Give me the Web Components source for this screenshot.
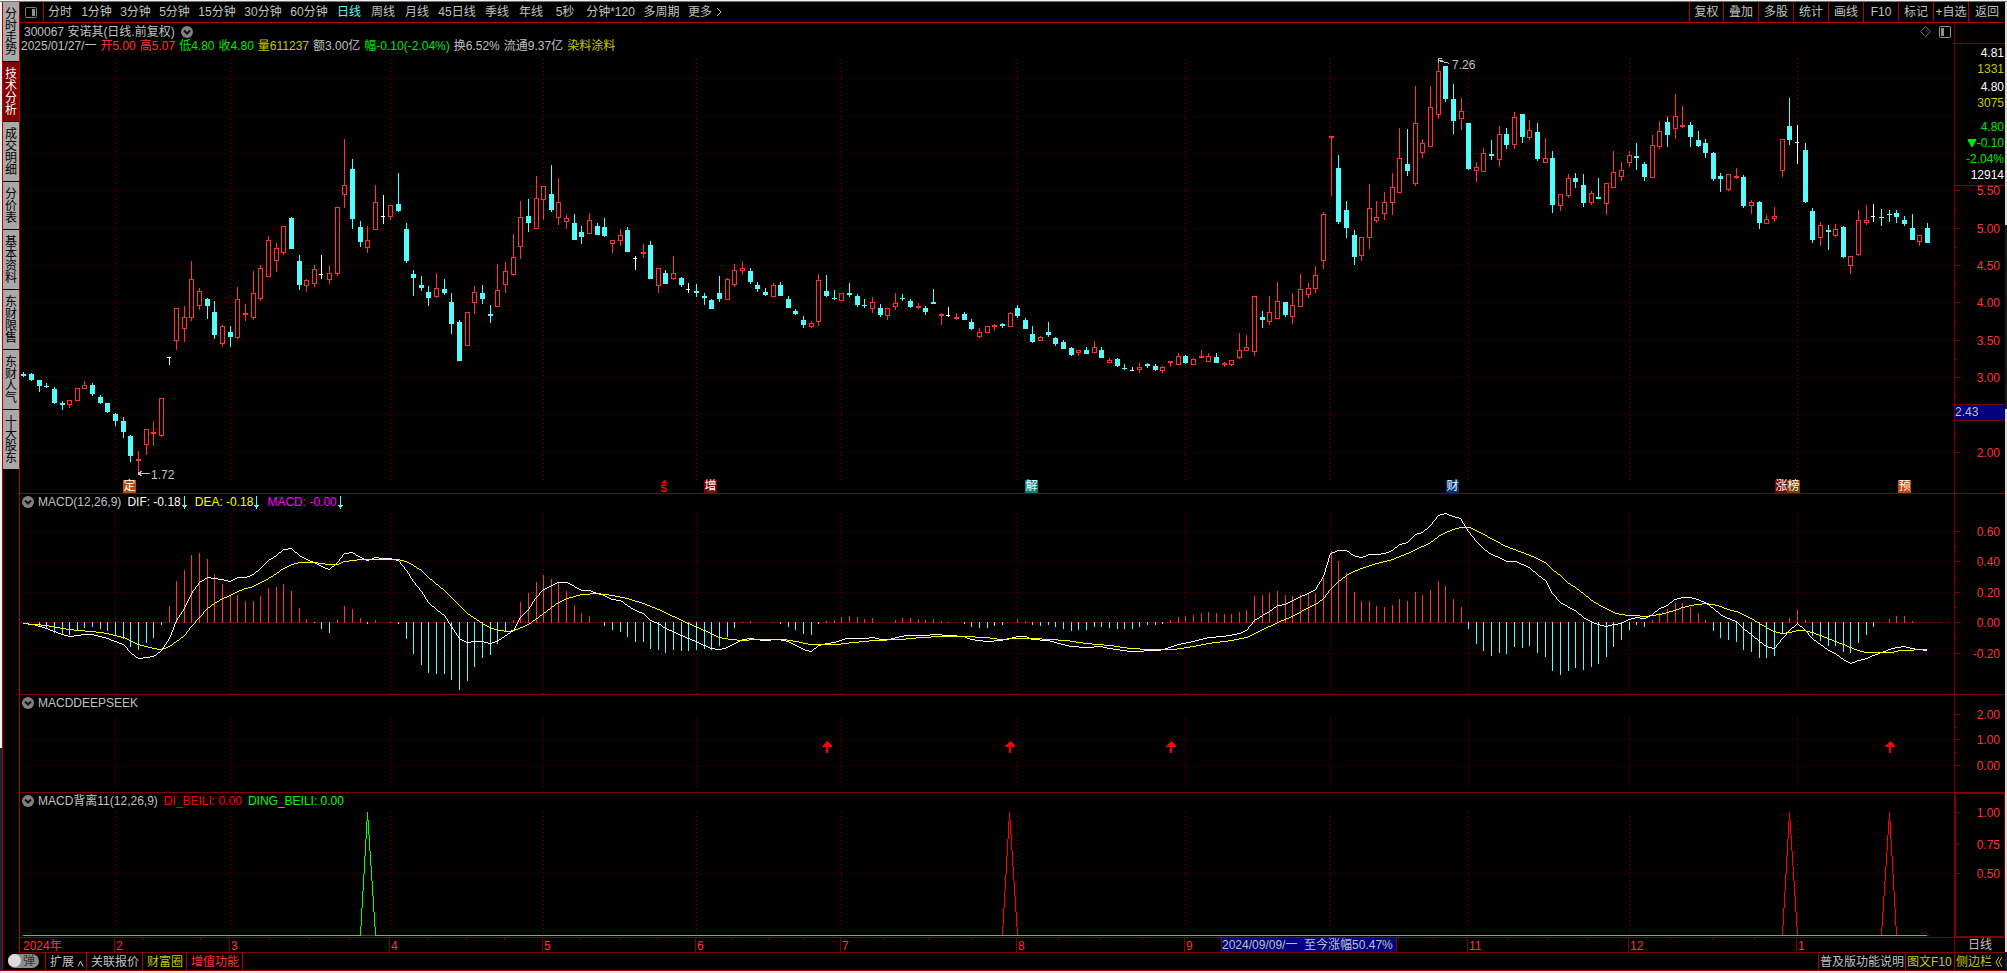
<!DOCTYPE html>
<html lang="zh-CN">
<head>
<meta charset="utf-8">
<title>300067 安诺其</title>
<style>
html,body{margin:0;height:100%}
body{background:#000;color:#c0c0c0;font:12px/16px "Liberation Sans","Noto Sans CJK SC",sans-serif;overflow:hidden;
--line:#b00000;--dim:#800000;--red:#ff3232;--cyan:#54fcfc;--olive:#c8c800;--green:#00e600}
</style>
</head>
<body>
<quote-app></quote-app>
<script>
/* ---------- data ---------- */
/* x advance between bars and chart-space helpers; prices are stored at a third of a chart unit */
const barX = i => 23 + Math.floor(i * 7.645 + 0.8);
const t = v => Math.round(v / 3);
const CANDLES = `c1117,1122,1128,1131 c1119,1122,1140,1143 c1140,1140,1158,1176 c1149,1157,1160,1164 c1161,1167,1209,1212 c1203,1209,1214,1230 r1200,1200,1215,1224 r1164,1164,1203,1203 r1143,1155,1167,1167 c1149,1155,1182,1188
c1185,1191,1209,1212 c1209,1209,1236,1239 c1239,1242,1263,1278 c1251,1263,1296,1314 c1305,1308,1368,1386 r1353,1377,1383,1416 r1287,1287,1335,1365 r1263,1296,1302,1338 r1194,1194,1308,1311 w1071,1071,1074,1095
r924,924,1023,1050 r918,951,987,1026 r783,837,954,963 r864,873,918,930 c894,897,918,957 c903,936,1005,1017 r975,978,1032,1041 c978,996,1011,1041 r861,897,1014,1017 r912,939,945,963
r813,879,954,960 r795,804,897,903 r708,720,831,831 r729,744,783,816 r678,678,759,765 c651,654,747,747 c765,783,855,870 r837,840,858,876 r795,807,852,861 w765,822,825,837
r795,819,840,852 r621,621,822,828 r417,555,585,624 c477,507,657,687 c663,681,726,741 r678,720,744,759 r555,606,690,690 w585,648,651,672 r615,615,651,660 c519,612,633,636
c669,687,783,789 c810,822,834,888 c828,855,864,873 c858,876,894,918 r819,864,891,894 c837,867,879,885 c879,906,972,1002 c960,966,1083,1083 r936,936,1038,1038 r858,876,909,942
c855,879,897,912 c915,942,948,969 r792,870,921,921 r786,813,855,879 r702,771,825,828 r603,651,741,777 c597,648,669,696 r528,594,687,687 r558,558,600,660 c495,582,630,636
r534,606,654,675 r645,654,666,687 c642,669,720,720 c678,696,711,732 r639,660,702,702 c669,678,705,705 c654,681,708,711 r720,720,732,759 r687,705,723,738 c681,690,756,756
w768,774,777,810 r732,756,762,774 c723,735,837,837 r804,804,858,879 c810,819,852,852 r768,819,837,840 c831,834,855,861 w849,867,870,879 c852,873,879,891 c879,888,894,915
c897,900,927,927 c828,879,897,906 r834,837,900,900 r792,810,855,861 r783,804,813,825 c804,813,846,852 c846,855,867,876 c864,876,885,888 r849,855,891,891 c846,855,888,888
c888,897,924,924 c927,933,942,945 c948,960,975,984 r963,969,981,984 r822,840,966,978 c825,873,888,891 c870,894,897,900 r879,879,903,903 c849,879,885,891 c882,888,915,921
c897,915,918,924 r891,906,927,939 c912,924,945,951 r924,924,948,960 r879,909,921,930 c882,894,897,903 c897,903,921,924 r909,918,924,927 c918,924,936,945 c867,906,912,912
r939,942,948,975 w921,945,948,951 r939,951,957,960 c936,942,960,960 c957,966,987,990 r984,996,1011,1014 r978,978,999,999 r972,975,981,993 c969,972,978,984 r936,939,981,981
c915,924,948,954 c954,960,987,987 c978,1002,1026,1029 r1008,1011,1023,1023 c966,996,1005,1011 c1011,1014,1032,1038 c1020,1026,1047,1047 c1041,1044,1065,1068 r1050,1050,1059,1068 c1041,1050,1062,1062
r1023,1041,1059,1059 c1041,1050,1074,1074 r1074,1080,1089,1089 c1074,1077,1098,1101 c1092,1104,1107,1110 w1101,1110,1113,1113 r1089,1101,1110,1119 c1089,1092,1098,1104 c1092,1098,1110,1113 r1098,1101,1113,1119
r1083,1083,1089,1101 r1059,1068,1095,1095 c1065,1068,1089,1092 r1074,1077,1095,1095 r1050,1068,1074,1074 r1059,1068,1086,1086 c1059,1071,1089,1089 r1086,1089,1095,1101 r1080,1080,1095,1098 r999,1050,1074,1077
r1005,1041,1053,1053 r888,888,1056,1068 c933,951,960,984 r888,936,966,975 r846,903,957,957 c906,906,945,951 r879,915,951,972 r822,867,921,921 r849,864,885,894 r798,825,867,879
r636,642,783,807 r408,408,414,588 c465,504,666,672 c603,630,684,714 c690,705,771,795 r711,711,768,783 r552,624,714,747 r603,651,663,669 r576,606,642,660 r519,561,609,645
r384,474,579,579 c387,492,513,528 r258,369,552,558 r417,429,459,474 r258,321,441,441 r180,213,345,357 c198,198,297,306 c252,297,363,402 r294,333,357,390 c369,369,507,510
r486,501,513,546 r444,459,516,516 c420,462,468,480 r378,402,480,501 c384,402,435,447 r336,351,435,447 c342,342,411,429 r360,390,414,420 c369,396,477,483 r414,474,489,489
c453,474,615,639 r582,582,618,633 r522,534,588,594 c519,534,546,564 c522,555,609,621 r573,579,609,615 c534,591,597,597 r549,549,612,645 r453,516,564,564 r486,510,531,543
r453,465,489,501 c429,468,474,510 c486,492,531,543 r405,435,534,534 r363,393,441,447 c351,366,405,441 r282,348,387,417 r318,375,381,384 c366,375,411,441 c393,420,438,441
c417,429,459,474 c456,459,537,543 c519,528,537,576 r522,522,570,573 r504,528,534,537 c525,531,618,624 r600,606,618,642 c603,606,669,687 r645,657,672,672 r621,648,657,666
r417,417,513,531 c294,378,420,435 w375,426,429,492 c429,450,606,609 c624,633,720,729 r666,675,714,738 c675,690,696,750 r672,687,708,711 c678,681,771,774 r768,768,798,822
r630,660,765,768 r615,660,669,675 w612,648,651,666 c627,651,654,678 c630,642,645,666 c630,639,651,669 c648,660,672,678 c642,684,720,720 r705,705,726,738 c669,684,729,729`
 .split(/\s+/).map(s => ({k: s[0], v: s.slice(1).split(',').map(t)}));

const HIST = [0,0,440,445,458,466,465,452,443,440,446,453,467,476,500,509,488,473,434,378,303,270,225,219,237,282,312,348,345,363,363,348,324,321,312,333,384,417,429,446,458,420,378,387,414,432,420,0,425,432,476,521,554,578,581,581,599,629,602,560,533,524,491,
453,420,366,339,306,285,297,309,333,375,399,408,0,438,449,455,470,485,485,506,509,518,509,512,512,509,506,509,497,470,443,425,423,0,0,425,431,440,449,461,464,432,423,420,411,408,411,417,414,0,0,420,414,414,417,420,417,423,425,0,432,440,443,443,437,
434,0,417,423,434,437,434,440,446,452,449,449,440,440,443,446,446,446,440,434,434,431,420,411,408,405,399,396,399,402,402,396,390,348,345,339,333,345,348,342,342,339,294,213,243,279,336,363,363,378,381,375,357,363,336,345,330,303,318,357,381,446,491,512,527,518,
521,500,503,497,518,530,572,584,572,563,569,560,551,530,500,479,449,434,440,420,399,387,369,369,381,399,420,452,473,479,485,509,515,533,533,527,458,414,390,420,467,482,497,497,515,518,488,464,440,0,417,408,408,423];

const DIF = `70,430 100,433 139,445 163,454 187,463 208,469 232,466 253,463 277,463 301,468 322,475 346,483 370,494 391,517 415,535 439,532 460,528 484,510 508,475 529,422 553,385 574,340 598,306 622,292 643,295 667,297 691,303 712,292 736,292 760,283 781,266 805,240 829,225 850,208 874,205 898,226 919,237 943,247 964,258 988,268 1012,248 1033,220 1057,217 1081,231 1102,241 1126,232 1150,234 1171,235 1195,240 1219,272 1240,303 1264,335 1285,367 1309,387 1333,405 1354,440 1378,476 1402,487 1423,484 1447,484 1471,490 1495,480 1540,450 1561,411 1585,388 1606,355 1630,327 1654,316 1675,307 1702,307 1723,319 1744,331 1768,331 1792,340 1813,346 1837,357 1861,362 1882,376 1906,391 1930,401 1951,421 1975,431 1996,445 2020,455 2044,466 2065,476 2089,485 2113,495 2134,504 2158,509 2182,503 2203,490 2227,478 2251,475 2290,481 2335,479 2365,485 2390,497 2410,508 2434,514 2455,496 2480,490 2503,487 2540,476 2590,475 2620,472 2645,478 2665,478 2690,472 2720,466 2780,466 2800,463 2850,466 2890,470 2914,478 2960,485 3000,481 3028,474 3052,468 3076,470 3097,478 3145,481 3166,488 3190,494 3214,499 3260,501 3300,499 3328,505 3350,508 3390,514 3425,514 3440,511 3475,511 3500,505 3535,493 3580,484 3625,472 3670,470 3718,461 3740,450 3763,421 3787,406 3808,393 3832,376 3856,373 3877,362 3901,348 3925,339 3946,328 3970,290 3991,220 4015,211 4039,211 4060,225 4084,232 4108,223 4129,223 4153,219 4177,211 4198,193 4222,186 4246,163 4267,156 4291,136 4315,106 4336,100 4360,109 4381,115 4405,153 4429,184 4450,206 4474,223 4498,232 4519,244 4545,244 4567,253 4588,262 4612,283 4636,302 4657,340 4681,367 4702,379 4726,391 4750,412 4771,424 4795,434 4819,439 4840,433 4864,429 4885,418 4909,412 4933,414 4957,402 4978,386 5002,375 5023,357 5047,352 5071,352 5092,357 5116,367 5140,386 5161,403 5185,414 5209,425 5230,446 5254,463 5278,483 5299,498 5323,505 5347,475 5368,452 5392,431 5413,447 5437,476 5461,493 5482,508 5506,519 5530,537 5551,550 5575,541 5599,535 5620,525 5644,518 5668,508 5689,502 5713,499 5734,504 5758,508 5780,512`;
const DEA = `70,430 139,436 187,444 232,451 277,455 322,460 370,471 391,481 415,493 439,500 460,505 484,508 508,499 529,485 553,465 574,440 598,412 622,386 643,370 667,356 691,346 712,335 736,325 760,319 781,308 805,294 829,280 850,266 874,253 898,247 943,247 964,250 985,253 1012,253 1033,244 1081,238 1195,238 1219,244 1240,255 1264,271 1285,291 1333,330 1378,376 1402,400 1447,430 1475,445 1500,452 1525,454 1550,449 1585,433 1606,418 1654,382 1675,366 1702,354 1744,344 1792,341 1837,347 1882,354 1930,371 1975,388 2020,410 2065,430 2113,452 2158,471 2190,479 2230,481 2260,478 2350,478 2390,484 2430,492 2510,493 2560,486 2620,481 2700,477 2760,471 2820,468 2890,469 2960,473 3000,478 3050,475 3100,475 3150,479 3200,482 3260,490 3330,496 3390,505 3450,508 3520,508 3580,499 3625,490 3695,482 3740,471 3763,460 3808,440 3832,426 3877,408 3925,382 3946,372 3970,354 3991,327 4015,303 4039,285 4060,274 4084,264 4129,250 4177,238 4222,219 4267,199 4291,186 4315,170 4336,156 4360,147 4381,142 4410,142 4429,151 4500,189 4519,199 4567,216 4612,236 4636,248 4657,268 4681,287 4702,308 4726,323 4750,341 4771,359 4795,373 4819,386 4840,397 4864,403 4885,406 4909,406 4933,409 4957,406 4978,404 5002,397 5023,391 5047,381 5071,376 5092,374 5116,370 5140,373 5161,378 5185,387 5209,393 5230,402 5254,414 5278,430 5299,441 5323,453 5347,460 5368,458 5392,451 5413,451 5437,457 5461,465 5506,483 5530,493 5551,503 5575,511 5599,517 5675,517 5700,512 5780,508`;
const MONTHS = [[115,'2'],[230,'3'],[390,'4'],[543,'5'],[696,'6'],[841,'7'],[1017,'8'],[1185,'9'],[1330,''],[1468,'11'],[1629,'12'],[1797,'1']];
const WEEKS = [143,200,269,309,349,427,466,504,580,619,657,731,768,804,884,928,972,1058,1100,1142,1220,1398,1433,1507,1548,1588,1670,1712,1754];
const X0 = 20, W = 1934;

/* ---------- drawing helpers ---------- */
const rect = (x,y,w,h,f) => `<rect x="${x}" y="${y}" width="${w}" height="${h}" fill="${f}"/>`;
const box = (x,y,w,h,f) => `<rect x="${x+.5}" y="${y+.5}" width="${w-1}" height="${h-1}" fill="#000" stroke="${f}"/>`;
/* one-cell-wide stepped line through integer points */
const stepped = (pts,c) => {
  let d = '';
  for(let i = 1; i < pts.length; i++){
    const [x0,y0] = pts[i-1], [x1,y1] = pts[i];
    const n = Math.max(Math.abs(x1-x0), Math.abs(y1-y0));
    for(let k = 0; k <= n; k++) d += `M${Math.round(x0+(x1-x0)*k/(n||1))} ${Math.round(y0+(y1-y0)*k/(n||1))}h1v1h-1z`;
  }
  return `<path d="${d}" fill="${c}"/>`;
};
const curve = (s,c) => stepped(s.split(' ').map(p => { const [x,y] = p.split(','); return [Math.floor(x/3), Math.floor(y/3)+480]; }), c);
const grid = (ys,top,bottom,dense) =>
  ys.map(y => `<path d="M21 ${y}.5H1951" stroke="${y===dense?'#a00000':'#700000'}" stroke-dasharray="${y===dense?'1 1':'1 3'}"/>`).join('') +
  MONTHS.map(([x]) => `<path d="M${x}.5 ${top}V${bottom}" stroke="#800000" stroke-dasharray="1 3"/>`).join('');

const RED = '#ff3232', CYAN = '#54fcfc';
const plots = {
  price: () => grid([78,116,153,190,228,265,302,340,377,414,452],59,481) +
    CANDLES.map(({k,v:[hi,a,b,lo]},i) => {
      const x = barX(i), c = k==='r' ? RED : k==='c' ? CYAN : '#fff', h = Math.max(1,b-a);
      const body = k==='w' ? rect(x-2,a,4,1,c) : k==='r' && h>2 ? box(x-2,a,5,h,c) : rect(x-2,a,5,h,c);
      return rect(x,hi,1,Math.max(1,lo-hi),c) + body;
    }).join('') +
    `<path d="M138.5 473.500H150M138.500 473.500L142.500 470.500M138.500 473.500L142.500 476.500M138 472.500h2v2h-2zM1438.500 60.500L1449.500 63.500M1438.500 63V58.500H1442M1438.500 60.500h4" fill="none" stroke="#c0c0c0"/>` +
    `<path d="M661 483h6l-3-3z" fill="#f00"/>`,
  macd: () => grid([531,561,592,622,653],513,694,622) +
    HIST.map((e,i) => { if(!e) return ''; const y = 480+t(e); return y<=622 ? rect(barX(i),y,1,623-y,RED) : rect(barX(i),622,1,Math.max(1,y-622),CYAN); }).join('') +
    curve(DIF,'#fff') + curve(DEA,'#ff0'),
  seek: () => grid([739,765],718,788) +
    [827,1010,1171,1890].map(x => `<path d="M${x} 741l5 5v1h-4v6h-2v-6h-4v-1z" fill="#f00"/>`).join(''),
  beili: () => grid([873],812,936) + rect(23,935,1904,1,'#0f0') +
    stepped([[360,934],[367,812],[375,934]],'#0f0') + rect(361,935,14,1,'#f00') +
    [[1002,1009,1017],[1782,1789,1797],[1881,1889,1896]].map(([a,b,c]) => stepped([[a,934],[b,812],[c,934]],'#f00')).join('')
};

/* ---------- components ---------- */
const define = (name, html) => customElements.define(name, class extends HTMLElement {
  connectedCallback(){
    if(this.shadowRoot) return;
    this.attachShadow({mode:'open'}).innerHTML = typeof html==='function' ? html(this) : html;
  }
});

define('fold-dot', `<style>:host{display:block;width:12px;height:12px;flex:none}button{all:unset;display:block;height:12px}svg{display:block}</style>
<button aria-label="菜单"><svg width="12" height="12" viewBox="0 0 12 12"><circle cx="6" cy="6" r="6" fill="#808080"/><path d="M3 4.500L6 7.500L9 4.500" fill="none" stroke="#111" stroke-width="2"/></svg></button>`);

define('down-arrow', `<style>:host{display:block;width:5px;height:13px;flex:none}svg{display:block}</style>
<svg width="5" height="13" viewBox="0 0 5 13" shape-rendering="crispEdges"><path d="M2 0h1v9h2v1h-1v1h-1v2h-1v-2h-1v-1h-1v-1h2z" fill="#54fcfc"/></svg>`);

const PERIODS = [['分时',34],['1分钟',39],['3分钟',39],['5分钟',39],['15分钟',46],['30分钟',46],['60分钟',46],['日线',34],['周线',34],['月线',34],['45日线',46],['季线',34],['年线',34],['5秒',34],['分钟*120',57],['多周期',45]];
define('period-bar', `<style>
:host{display:flex;height:20px;border-bottom:1px solid var(--line);line-height:20px;white-space:nowrap}
button{all:unset;box-sizing:border-box;text-align:center;flex:none;height:20px}
.split{width:24px;margin-right:-1px;border-right:1px solid var(--line);display:flex;align-items:center;padding-left:5px}
.on{color:var(--cyan)}
.more{display:flex;align-items:center;gap:4px;padding-left:4px}
.acts{display:flex;margin-left:auto}
.acts button{width:35px;border-left:1px solid var(--line)}
.acts button:first-child{width:34px}.acts button:last-child{width:37px}
</style>
<button class="split" aria-label="布局"><svg width="12" height="11" viewBox="0 0 12 11"><rect x=".5" y=".5" width="11" height="10" rx="1" fill="none" stroke="#808080"/><rect x="7" y="2" width="3" height="7" fill="#909090"/></svg></button>
${PERIODS.map(([s,w]) => `<button style="width:${w}px"${s==='日线'?' class="on"':''}>${s}</button>`).join('')}
<button class="more">更多<svg width="6" height="10" viewBox="0 0 6 10"><path d="M1 1L5 5L1 9" fill="none" stroke="#c0c0c0"/></svg></button>
<div class="acts">${['复权','叠加','多股','统计','画线','F10','标记','+自选','返回'].map(s => `<button>${s}</button>`).join('')}</div>`);

define('side-tabs', `<style>
:host{display:flex;flex-direction:column;border-right:1px solid var(--line);width:16px}
button{all:unset;box-sizing:border-box;display:flex;align-items:center;justify-content:center;height:60px;border-bottom:1px solid #000;background:#a9a9a9;color:#000;line-height:12px}
button.three{height:48px}
button:first-child{height:59px}
button.on{background:#800000;color:#fff}
span{width:12px;word-break:break-all}
</style>${['分时走势','技术分析','成交明细','分价表','基本资料','东财限售','东财人气','十大股东'].map(s => `<button class="${s.length===3?'three':''}${s==='技术分析'?'on':''}"><span>${s}</span></button>`).join('')}`);

/* A chart pane: title slot on top, plot behind, markers placed along the time scale */
define('chart-pane', el => {
  const [y,h] = el.getAttribute('range').split(' ').map(Number);
  return `<style>
:host{display:block;position:relative;border-bottom:1px solid var(--dim);min-height:0;overflow:hidden}
svg{position:absolute;inset:0;width:100%;height:100%;display:block}
.head{position:relative}
</style><svg viewBox="${X0} ${y} ${W} ${h}" preserveAspectRatio="none" shape-rendering="crispEdges">${plots[el.getAttribute('plot')]()}</svg>
<div class="head"><slot></slot></div><slot name="mark"></slot>`;
});

define('study-title', `<style>:host{display:flex;align-items:center;height:16px;line-height:16px;padding-left:2px;white-space:nowrap}fold-dot{margin-right:4px}</style><fold-dot></fold-dot><slot></slot>`);

define('event-tag', el => `<style>
:host{position:absolute;bottom:0;left:${(el.getAttribute('at')-X0)/W*100}%;width:13px;height:13px;line-height:13px;background:${el.getAttribute('tone')};color:#fff;text-align:center;white-space:nowrap}
:host([plain]){width:7px;height:9px;line-height:9px;font-size:10px;font-weight:bold;color:#f00}
</style><slot></slot>`);

define('price-note', el => `<style>
:host{position:absolute;left:${(el.getAttribute('at')-X0)/W*100}%;top:${(el.getAttribute('y')-23)/470*100}%;line-height:16px}
</style><slot></slot>`);

/* Value scale at the right of a pane */
define('value-scale', el => {
  const [y,h] = el.getAttribute('range').split(' ').map(Number);
  const marks = el.getAttribute('marks').split(' ').map(s => s.split('@'));
  const minor = el.getAttribute('minor').split(' ');
  const pc = v => (v-y)/h*100+'%';
  return `<style>
:host{display:block;position:relative;border-left:1px solid var(--dim);border-bottom:1px solid var(--dim);min-height:0;overflow:hidden}
:host([boxed]){box-shadow:inset 0 0 0 1px var(--dim)}
.n{position:absolute;right:5px;margin-top:-7px;line-height:16px;color:var(--red)}
i{position:absolute;left:0;width:5px;height:1px;background:var(--dim)}
i.s{width:2px}
.cur{position:absolute;left:0;right:0;height:15px;line-height:15px;background:#000080;border:solid var(--dim);border-width:1px 0}
</style>${marks.map(([v,p]) => `<i style="top:${pc(p)}"></i><span class="n" style="top:${pc(p)}">${v}</span>`).join('')}
${minor.map(p => `<i class="s" style="top:${pc(p)}"></i>`).join('')}
${el.hasAttribute('current') ? `<div class="cur" style="top:${pc(404)}">${el.getAttribute('current')}</div>` : ''}
<slot></slot>`;
});

define('quote-box', `<style>
:host{display:flex;flex-direction:column;box-sizing:border-box;position:relative;margin-top:20px;height:143px;padding-top:1px;border:solid var(--dim);border-width:1px 0;text-align:right;color:#fff;background:#000}
span{line-height:16px;padding-right:1px}.y{color:var(--olive)}.g{color:var(--green)}.a{margin-top:2px}.b{margin-top:8px}
.d{display:flex;justify-content:flex-end;align-items:center;gap:1px}
</style><span>4.81</span><span class="y">1331</span><span class="a">4.80</span><span class="y">3075</span>
<span class="g b">4.80</span><span class="g d"><svg width="8" height="8" viewBox="0 0 8 8"><path d="M0 0h8v2L4.500 8h-1L0 2z" fill="#00e600"/></svg>-0.10</span><span class="g">-2.04%</span><span>12914</span>`);

define('time-scale', `<style>
:host{display:block;position:relative;height:14px;border-bottom:1px solid var(--dim);line-height:14px;color:var(--red);white-space:nowrap}
span{position:absolute;top:0;height:14px;border-left:1px solid var(--dim);padding-left:1px;line-height:16px}
span.y{border:0;padding:0}
i{position:absolute;top:0;width:1px;height:2px;background:var(--dim)}
.cur{position:absolute;box-sizing:border-box;width:176px;height:14px;background:#000080;color:#c0c0c0;border:solid var(--dim);border-width:0 1px}
</style>
<span class="y" style="left:${3/W*100}%">2024年</span>
${MONTHS.filter(m => m[1]).map(([x,s]) => `<span style="left:${(x-1-X0)/W*100}%">${s}</span>`).join('')}
${WEEKS.map(x => `<i style="left:${(x-X0)/W*100}%"></i>`).join('')}
<div class="cur" style="left:${(1221-X0)/W*100}%">2024/09/09/一&nbsp; 至今涨幅50.47%</div>`);

define('status-bar', `<style>
:host{display:flex;height:17px;border-bottom:1px solid var(--line);line-height:18px;white-space:nowrap}
label{width:42px;box-sizing:border-box;padding:1px 0 0 5px;flex:none;position:relative}
input{appearance:none;margin:0;display:block;width:31px;height:14px;border-radius:7px;background:#8c8c8c}
input::before{content:"";display:block;width:13px;height:13px;border-radius:50%;background:#dcdcdc}
label span{position:absolute;left:20px;top:1px;line-height:14px;color:#333}
button{all:unset;box-sizing:border-box;flex:none;height:17px;padding-left:4px;border-left:1px solid var(--line)}
.y{color:var(--olive)}.r{color:var(--red)}
.gap{flex:1;border-left:1px solid var(--line)}
.t{padding-left:1px}
svg{margin-left:3px;vertical-align:-1px}
</style>
<label><input type="checkbox"><span>弹</span></label>
<button style="width:41px">扩展<svg width="7" height="7" viewBox="0 0 7 7"><path d="M1 6.500L3.500 1L6 6.500" fill="none" stroke="#c0c0c0"/></svg></button>
<button style="width:56px">关联报价</button><button style="width:44px" class="y">财富圈</button><button style="width:56px" class="r">增值功能</button>
<div class="gap"></div>
<button style="width:87px" class="t">普及版功能说明</button><button style="width:49px" class="y t">图文F10</button>
<button style="width:51px" class="y t">侧边栏<svg width="8" height="10" viewBox="0 0 8 10"><path d="M4 0L1 5L4 10M7 0L4 5L7 10" fill="none" stroke="#c8c800"/></svg></button>`);

define('quote-app', `<style>
:host{display:grid;box-sizing:border-box;height:100vh;grid-template-columns:2px 1px minmax(0,1fr) 2px;grid-template-rows:2px minmax(0,1fr) 2px}
.top{grid-column:1/-1;background:#f0f0f0;border-bottom:1px solid #707070;box-sizing:border-box}
.bot{grid-column:1/-1;background:#f0e8e8}
.l{background:linear-gradient(#f0f0f0 77%,#20203c 77%)}
.edge{background:var(--line)}
.r{background:linear-gradient(#dcdcdc 23%,#181818 23% 42%,#dcdcdc 42% 98%,#181830 98%)}
.win{display:grid;grid-template-rows:minmax(0,1fr) 18px;min-width:0}
.body{display:grid;grid-template-columns:17px minmax(0,1fr)}
.main{display:grid;grid-template-rows:21px minmax(0,471fr) minmax(0,201fr) minmax(0,98fr) minmax(0,145fr) 15px;grid-template-columns:minmax(0,1fr) 51px}
period-bar{grid-column:1/-1}
.name,.info{display:flex;align-items:center;white-space:nowrap}
.name{height:17px;padding-left:4px}
.name fold-dot{margin-left:6px}
.name .ic{margin-left:auto;display:flex;gap:8px;align-items:center;padding-right:3px}
.ic button{all:unset;display:block}.ic svg{display:block}
.info{height:12px;line-height:12px;padding-left:1px;gap:4px}
.up{color:var(--red)}.dn{color:var(--green)}.y{color:var(--olive)}
.v{margin-left:8px}.v0{margin-left:6px}down-arrow{margin-left:1px}
.unit{border-left:1px solid var(--dim);border-bottom:1px solid var(--dim);text-align:center;line-height:15px}
</style>
<div class="top"></div>
<div class="l"></div><div class="edge"></div>
<div class="win"><div class="body"><side-tabs></side-tabs>
<div class="main">
<period-bar></period-bar>
<chart-pane plot="price" range="23 470">
 <div class="name"><span>300067 安诺其(日线.前复权)</span><fold-dot></fold-dot>
  <div class="ic"><button aria-label="标记"><svg width="11" height="11" viewBox="0 0 11 11"><path d="M5.500 .5L10.500 5.500L5.500 10.500L.5 5.500z" fill="none" stroke="#707070"/></svg></button>
  <button aria-label="侧栏"><svg width="12" height="12" viewBox="0 0 12 12"><rect x=".5" y=".5" width="11" height="11" rx="1" fill="none" stroke="#909090"/><rect x="2" y="2" width="3" height="8" fill="#909090"/></svg></button></div></div>
 <div class="info"><span>2025/01/27/一</span><span class="up">开5.00</span><span class="up">高5.07</span><span class="dn">低4.80</span><span class="dn">收4.80</span><span class="y">量611237</span><span>额3.00亿</span><span class="dn">幅-0.10(-2.04%)</span><span>换6.52%</span><span>流通9.37亿</span><span class="y">染料涂料</span></div>
 <price-note slot="mark" at="151" y="467">1.72</price-note>
 <price-note slot="mark" at="1452" y="57">7.26</price-note>
 <event-tag slot="mark" at="123" tone="#c04808">定</event-tag>
 <event-tag slot="mark" at="660" tone="none" plain>S</event-tag>
 <event-tag slot="mark" at="704" tone="#800000">增</event-tag>
 <event-tag slot="mark" at="1025" tone="#008080">解</event-tag>
 <event-tag slot="mark" at="1446" tone="#003070">财</event-tag>
 <event-tag slot="mark" at="1775" tone="#800000">涨</event-tag>
 <event-tag slot="mark" at="1787" tone="#804000">榜</event-tag>
 <event-tag slot="mark" at="1898" tone="#c04808">预</event-tag>
</chart-pane>
<value-scale range="23 470" current="2.43" marks="5.50@190 5.00@228 4.50@265 4.00@302 3.50@340 3.00@377 2.00@452" minor="209 247 284 321 359 396 433"><quote-box></quote-box></value-scale>
<chart-pane plot="macd" range="494 200"><study-title><span>MACD(12,26,9)</span><span class="v0" style="color:#fff">DIF: -0.18</span><down-arrow></down-arrow><span class="v" style="color:#ff0">DEA: -0.18</span><down-arrow></down-arrow><span class="v" style="color:#f0f">MACD: -0.00</span><down-arrow></down-arrow></study-title></chart-pane>
<value-scale range="494 200" marks="0.60@531 0.40@561 0.20@592 0.00@622 -0.20@653" minor="546 577 607 638"></value-scale>
<chart-pane plot="seek" range="695 97"><study-title><span>MACDDEEPSEEK</span></study-title></chart-pane>
<value-scale range="695 97" marks="2.00@714 1.00@739 0.00@765" minor="727 752"></value-scale>
<chart-pane plot="beili" range="793 144"><study-title><span>MACD背离11(12,26,9)</span><span class="v0" style="color:#f00">DI_BEILI: 0.00</span><span class="v0" style="color:#0f0">DING_BEILI: 0.00</span></study-title></chart-pane>
<value-scale boxed range="793 144" marks="1.00@812 0.75@844 0.50@873" minor="843"></value-scale>
<time-scale></time-scale><div class="unit">日线</div>
</div></div>
<status-bar></status-bar></div>
<div class="r"></div><div class="bot"></div>`);
</script>
</body>
</html>
